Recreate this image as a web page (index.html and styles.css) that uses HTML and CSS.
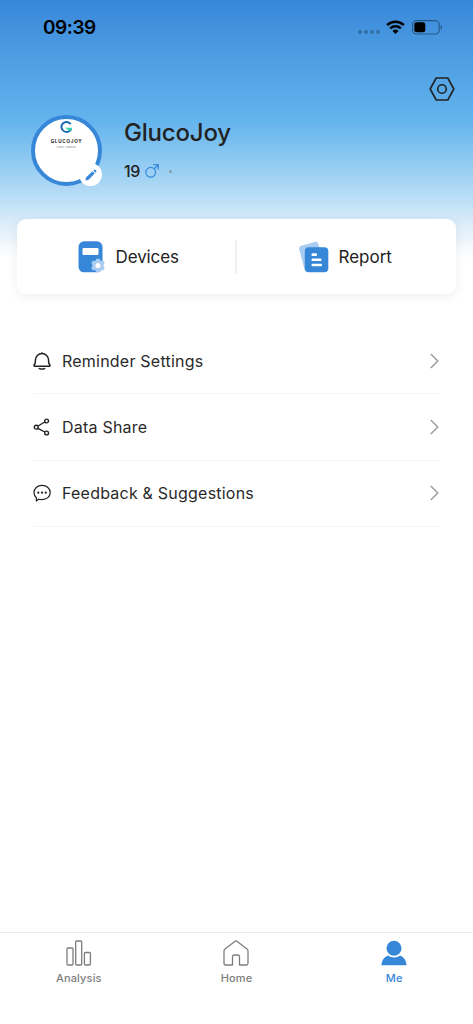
FILE: index.html
```html
<!DOCTYPE html>
<html lang="en">
<head>
<meta charset="utf-8">
<title>GlucoJoy</title>
<link rel="stylesheet" href="styles.css">
</head>
<body>
<div class="screen">
  <header class="status">
    <span class="time">09:39</span>
    <div class="status-icons">
      <svg class="dots" width="22" height="4" viewBox="0 0 22 4"><circle cx="2" cy="2" r="2"/><circle cx="8" cy="2" r="2"/><circle cx="14" cy="2" r="2"/><circle cx="20" cy="2" r="2"/></svg>
      <svg class="wifi" width="19" height="14" viewBox="0 0 19 14"><g fill="none" stroke="#000" stroke-width="2.4"><path d="M1.2 5.1a11.9 11.9 0 0 1 16.6 0"/><path d="M4.2 8.4a7.6 7.6 0 0 1 10.6 0"/></g><path d="M6.5 10.9a4.3 4.3 0 0 1 6 0L9.500 14z"/></svg>
      <svg width="31" height="15" viewBox="0 0 31 15"><rect x=".6" y=".6" width="26.600" height="13.400" rx="4" fill="none" stroke="#000" stroke-opacity=".4" stroke-width="1.100"/><rect x="2.300" y="2.300" width="11" height="10" rx="2.500"/><path d="M28.700 5c1.600.5 1.600 4.200 0 4.800z" opacity=".45"/></svg>
    </div>
  </header>
  <div class="toolbar">
    <svg width="26" height="24" viewBox="0 0 26 24" fill="none" stroke="#222" stroke-width="1.600" stroke-linejoin="round"><path d="M7.200 1h11.600l6 11-6 11H7.200l-6-11z"/><circle cx="13" cy="12" r="4.300"/></svg>
  </div>
  <section class="profile">
    <div class="avatar">
      <svg width="13" height="13" viewBox="0 0 14 14" fill="none"><path d="M11.500 3.300A5.500 5.300 0 1 0 12.300 8" stroke="#1769b5" stroke-width="2.100"/><path d="M5.200 7.200h7.500c0 1.500-.4 2.700-1.400 3.700L8.600 9.500z" fill="#31d5ad"/></svg>
      <span class="brand">GLUCOJOY</span>
      <span class="tagline">COOL LIBRARY</span>
      <span class="edit"><svg width="12" height="12" viewBox="0 0 12 12" fill="#3787d9"><path d="M.4 11.600 1 8.600 7.500 2.300l2.200 2.200L3.200 11zM8.300 1.500l.8-.8c.8-.8 3 1.200 2.200 2.200l-.8.800z"/></svg></span>
    </div>
    <div class="who">
      <h1>GlucoJoy</h1>
      <div class="meta"><span>19</span><svg width="14" height="14" viewBox="0 0 14 14" fill="none" stroke="#3d8cde" stroke-width="1.300"><circle cx="5.700" cy="8.300" r="4.900"/><path d="M9.200 4.800 13.200.8M8.200.7h5.100v5.100"/></svg><i></i></div>
    </div>
  </section>
  <section class="card">
    <div class="action devices">
      <svg width="28" height="32" viewBox="0 0 28 32"><rect x=".5" y=".3" width="24" height="31" rx="5.500" fill="#3787d9"/><rect x="4.500" y="7" width="16" height="7" rx="1" fill="#fff"/><g fill="#a9cdf1"><circle cx="20" cy="24.500" r="5.500"/><circle cx="20" cy="19.700" r="2.300"/><circle cx="24.200" cy="22" r="2.300"/><circle cx="24.200" cy="27" r="2.300"/><circle cx="20" cy="29.300" r="2.300"/><circle cx="15.800" cy="27" r="2.300"/><circle cx="15.800" cy="22" r="2.300"/></g><circle cx="20" cy="24.500" r="2.500" fill="#fff"/></svg>
      <span>Devices</span>
    </div>
    <div class="action report">
      <svg width="30" height="32" viewBox="0 0 30 32"><rect x="2.300" y="2.500" width="20" height="26" rx="3" fill="#a9cdf1" transform="rotate(-15 12 15)"/><rect x="5.800" y="6.300" width="23.500" height="25" rx="4" fill="#3787d9"/><g fill="#fff"><rect x="12.500" y="12.300" width="5.500" height="2.600" rx="1"/><rect x="12.500" y="17.600" width="10" height="2.400" rx="1"/><rect x="12.500" y="22.800" width="10.500" height="2.400" rx="1"/></g></svg>
      <span>Report</span>
    </div>
  </section>
  <nav class="list">
    <a class="row">
      <svg width="18" height="18" viewBox="0 0 18 18" fill="none" stroke="#222" stroke-width="1.500" stroke-linecap="round" stroke-linejoin="round"><path d="M9 .8v.8M1.700 14.200h14.600q1.200-.3.500-1.300c-1-1.200-1.200-2-1.200-3.400V8.100a6.600 6.600 0 0 0-13.200 0v1.400c0 1.400-.2 2.200-1.200 3.400q-.7 1 .5 1.300zM6.300 16.600q2.700 1 5.400 0"/></svg>
      <span>Reminder Settings</span>
      <svg class="chevron" width="9" height="16" viewBox="0 0 9 16"><path d="m.8 1 7 7-7 7"/></svg>
    </a>
    <a class="row">
      <svg width="18" height="18" viewBox="0 0 18 18" fill="none" stroke="#222" stroke-width="1.400"><circle cx="3.200" cy="9.200" r="1.900"/><circle cx="13.600" cy="3" r="1.900"/><circle cx="13.600" cy="15" r="1.900"/><path d="m5 8 6.800-4M5 10.300l6.800 3.700"/></svg>
      <span>Data Share</span>
      <svg class="chevron" width="9" height="16" viewBox="0 0 9 16"><path d="m.8 1 7 7-7 7"/></svg>
    </a>
    <a class="row">
      <svg width="18" height="18" viewBox="0 0 18 18" fill="none" stroke="#222" stroke-width="1.200" stroke-linejoin="round"><path d="M3.500 14A7 7 0 0 1 1 8.700C1 4.500 4.300 1.400 9 1.400s8.200 3.100 8.200 7.200-3.500 7-8.200 7c-1.500 0-2.500-.1-3.300-.4L3.300 17z"/><g fill="#222" stroke="none"><circle cx="5.300" cy="8.700" r="1.100"/><circle cx="9" cy="8.700" r="1.100"/><circle cx="12.700" cy="8.700" r="1.100"/></g></svg>
      <span>Feedback &amp; Suggestions</span>
      <svg class="chevron" width="9" height="16" viewBox="0 0 9 16"><path d="m.8 1 7 7-7 7"/></svg>
    </a>
  </nav>
  <footer class="tabs">
    <a class="tab"><svg width="26" height="26" viewBox="0 0 26 26" fill="none" stroke="#7d7d7d" stroke-width="1.300"><rect x="1" y="8" width="6" height="17" rx="1"/><rect x="9.700" y="1" width="6" height="24" rx="1"/><rect x="18.400" y="12.500" width="6" height="12.500" rx="1"/></svg><span>Analysis</span></a>
    <a class="tab"><svg width="26" height="26" viewBox="0 0 26 26" fill="none" stroke="#7d7d7d" stroke-width="1.300" stroke-linejoin="round"><path d="M9.500 25H2.800Q1 25 1 23.200V10.800Q1 9.800 2 9l9.800-7.500q1.200-1 2.400 0L24 9q1 .8 1 1.800v12.400q0 1.800-1.800 1.800h-6.700v-8.300q0-1.700-1.700-1.700h-3.600q-1.700 0-1.700 1.700z"/></svg><span>Home</span></a>
    <a class="tab active"><svg width="26" height="26" viewBox="0 0 26 26" fill="#3787d9"><circle cx="13" cy="8.300" r="7.500"/><path d="M.5 25.200c.2-4.500 2.500-8 6.500-9.600 3.300 2.600 8.700 2.600 12 0 4 1.600 6.300 5.100 6.500 9.600z"/></svg><span>Me</span></a>
  </footer>
</div>
</body>
</html>
```
FILE: styles.css
```css
* { box-sizing: border-box; }
body { margin: 0; background: #fff; font-family: Inter, "Liberation Sans", sans-serif; color: #222; }
svg { display: block; flex: none; }
.screen { width: 473px; height: 1024px; display: flex; flex-direction: column; background: linear-gradient(#3787da 0, #4b9be1 50px, #62b4ed 120px, #a4d4f4 180px, #d5eaf9 219px, #fff 257px); }
.status { height: 54px; padding: 0 30px 0 43px; display: flex; justify-content: space-between; align-items: center; color: #000; }
.time { font-size: 19px; font-weight: 600; line-height: 24px; letter-spacing: -.45px; padding-top: 1px; }
.status-icons { display: flex; align-items: center; gap: 6px; }
.dots { margin-top: 10px; opacity: .25; }
.wifi { margin-right: 1px; }
.toolbar { height: 61px; padding: 23px 18px 0; display: flex; justify-content: flex-end; }
.profile { height: 104px; padding-left: 31px; display: flex; gap: 22px; }
.avatar { position: relative; width: 71px; height: 71px; border: 4px solid #3787d9; border-radius: 50%; background: #fff; display: flex; flex-direction: column; align-items: center; padding-top: 2px; }
.brand { font-size: 4.6px; font-weight: 700; letter-spacing: .75px; line-height: 6px; margin-top: 5px; }
.tagline { font-size: 2.5px; line-height: 3px; letter-spacing: .1px; color: #777; margin-top: 1px; }
.edit { position: absolute; right: -4px; bottom: -4px; width: 23px; height: 23px; border-radius: 50%; background: #fff; display: grid; place-items: center; }
h1 { margin: 3px 0 0; font-size: 24px; font-weight: 500; line-height: 30px; letter-spacing: -.2px; }
.meta { display: flex; align-items: center; height: 22px; margin-top: 12px; font-size: 16px; font-weight: 500; }
.meta span { width: 21px; letter-spacing: -.3px; }
.meta i { width: 3px; height: 3px; border-radius: 50%; background: #8c9ca8; margin-left: 10px; }
.card { height: 75px; margin: 0 17px; border-radius: 9px; background: #fff; box-shadow: 0 2px 12px rgba(0,0,0,.07); display: flex; align-items: center; }
.action { height: 34px; width: 220px; display: flex; align-items: center; font-size: 17px; }
.devices { padding-left: 61px; gap: 9.5px; border-right: 2px solid #f0f0f0; letter-spacing: -.1px; }
.report { padding-left: 62px; gap: 10px; }
.list { margin: 34px 33px 0; }
.row { height: 66.3px; display: flex; align-items: center; border-bottom: 1px solid #f4f4f4; font-size: 16px; letter-spacing: .22px; color: #2a2a2a; }
.row span { margin-left: 11px; flex: 1; }
.chevron { fill: none; stroke: #999; stroke-width: 1.4; margin-right: 1px; }
.tabs { margin-top: auto; height: 92px; border-top: 1px solid #eaeaea; display: grid; grid-template-columns: repeat(3, 1fr); }
.tab { display: flex; flex-direction: column; align-items: center; padding-top: 7px; font-size: 11px; font-weight: 500; line-height: 16px; letter-spacing: .15px; color: #7d7d7d; }
.tab span { margin-top: 4px; }
.active { color: #3787d9; }
```
